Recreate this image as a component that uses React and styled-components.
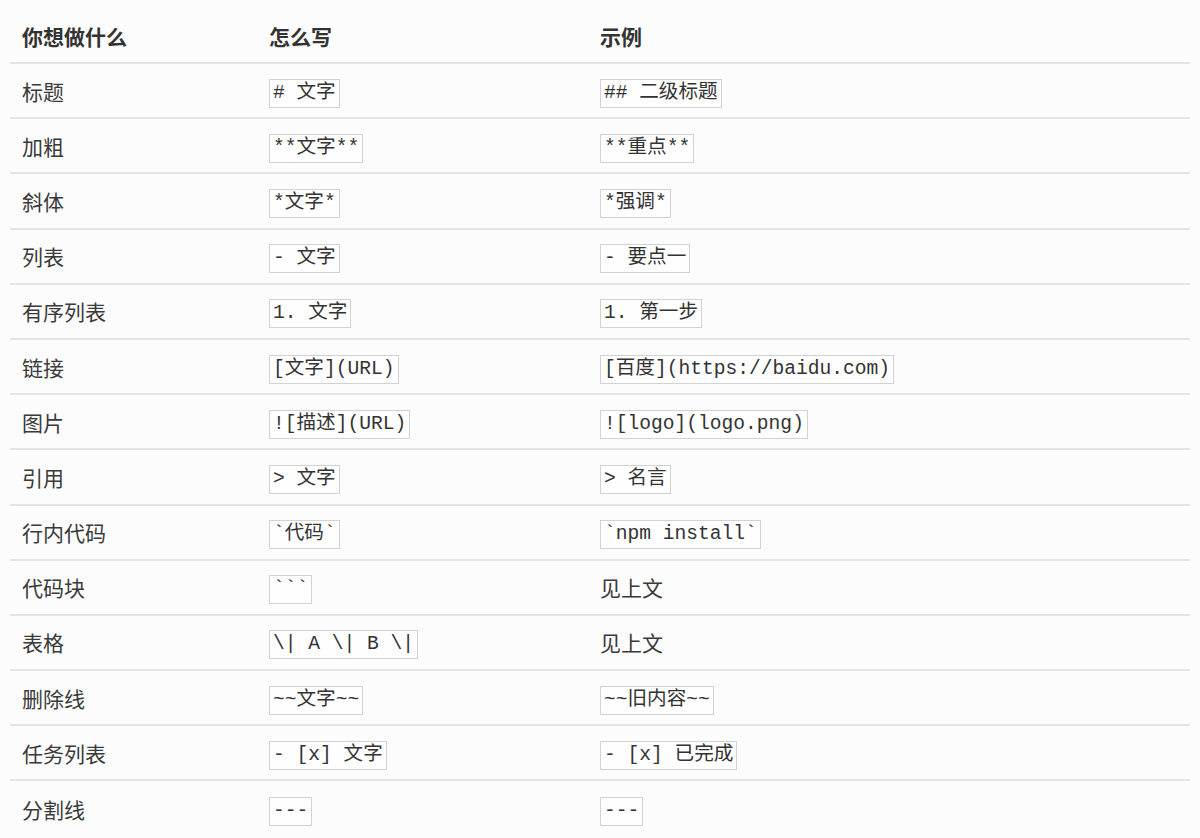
import styled, { createGlobalStyle } from "styled-components";

const GlobalStyle = createGlobalStyle`
  html, body {
    margin: 0;
    padding: 0;
    background: #fcfcfc;
  }
  body {
    font-family: "Noto Sans CJK SC", "Noto Sans", sans-serif;
    color: #333;
  }
`;

const rows = [
  ["标题", "# 文字", "## 二级标题"],
  ["加粗", "**文字**", "**重点**"],
  ["斜体", "*文字*", "*强调*"],
  ["列表", "- 文字", "- 要点一"],
  ["有序列表", "1. 文字", "1. 第一步"],
  ["链接", "[文字](URL)", "[百度](https://baidu.com)"],
  ["图片", "![描述](URL)", "![logo](logo.png)"],
  ["引用", "> 文字", "> 名言"],
  ["行内代码", "`代码`", "`npm install`"],
  ["代码块", "```", null],
  ["表格", "\\| A \\| B \\|", null],
  ["删除线", "~~文字~~", "~~旧内容~~"],
  ["任务列表", "- [x] 文字", "- [x] 已完成"],
  ["分割线", "---", "---"],
];

const App = () => {
  return (
    <Page>
      <GlobalStyle />
      <Table>
        <colgroup>
          <col style={{ width: 247 }} />
          <col style={{ width: 331 }} />
          <col />
        </colgroup>
        <thead>
          <tr>
            <HeadCell>你想做什么</HeadCell>
            <HeadCell>怎么写</HeadCell>
            <HeadCell>示例</HeadCell>
          </tr>
        </thead>
        <tbody>
          {rows.map(([what, how, example], i) => (
            <Row key={i} $last={i === rows.length - 1}>
              <Cell>{what}</Cell>
              <Cell>
                <Code>{how}</Code>
              </Cell>
              <Cell>{example ? <Code>{example}</Code> : "见上文"}</Cell>
            </Row>
          ))}
        </tbody>
      </Table>
    </Page>
  );
};

export default App;

const Page = styled.div`
  padding: 9px 10px 0;
`;
const Table = styled.table`
  width: 1180px;
  border-collapse: collapse;
  table-layout: fixed;
`;
const HeadCell = styled.th`
  height: 53px;
  padding: 0 12px;
  text-align: left;
  font-size: 21px;
  font-weight: 700;
  color: #333;
  border-bottom: 2px solid #e4e4e4;
  vertical-align: middle;
`;
const Row = styled.tr`
  height: 55.2px;
  & > td {
    border-bottom: ${(p) => (p.$last ? "none" : "2px solid #e4e4e4")};
  }
`;
const Cell = styled.td`
  padding: 0 12px;
  font-size: 21px;
  color: #3a3a3a;
  vertical-align: middle;
  white-space: nowrap;
`;
const Code = styled.code`
  display: inline-block;
  font-family: "Liberation Mono", "Noto Sans CJK SC", monospace;
  font-size: 19.6px;
  line-height: 27px;
  padding: 0 3px;
  border: 1.5px solid #d2d2d2;
  background: #fefefe;
  color: #333;
  white-space: pre;
`;
